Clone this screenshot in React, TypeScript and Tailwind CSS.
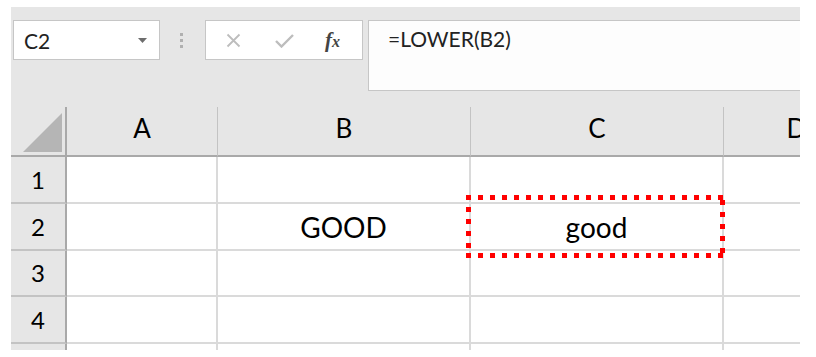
import React from 'react'

const font = { fontFamily: 'Lato, "Noto Sans", sans-serif' }

const cols = [
  { key: 'A', w: 'w-[151px]' },
  { key: 'B', w: 'w-[253px]' },
  { key: 'C', w: 'w-[253px]' },
  { key: 'D', w: 'w-[146px]' },
]

const rows = [
  { n: '1', h: 'h-[47px]' },
  { n: '2', h: 'h-[47px]' },
  { n: '3', h: 'h-[46px]' },
  { n: '4', h: 'h-[47px]' },
  { n: '', h: 'h-[47px]' },
]

const values: Record<string, string> = { B2: 'GOOD', C2: 'good' }

function NameBox() {
  return (
    <div className="ml-[2px] w-[147px] h-[40px] bg-white border border-[#c6c6c6] flex items-center pl-[10px] pr-[12px]">
      <span className="text-[21px] text-[#222] leading-none flex-1">C2</span>
      <svg width="9" height="5" viewBox="0 0 9 5">
        <path d="M0 0 L9 0 L4.5 5 Z" fill="#6d6d6d" />
      </svg>
    </div>
  )
}

function FxBox() {
  return (
    <div className="ml-[22px] w-[158px] h-[40px] bg-white border border-[#c6c6c6] flex items-center">
      <svg className="ml-[20px]" width="15" height="15" viewBox="0 0 15 15">
        <path d="M1.5 1.5 L13.5 13.5 M13.5 1.5 L1.5 13.5" stroke="#bdbdbd" strokeWidth="1.8" fill="none" />
      </svg>
      <svg className="ml-[34px]" width="19" height="15" viewBox="0 0 19 15">
        <path d="M1 8 L6.5 13.5 L18 2" stroke="#bdbdbd" strokeWidth="2.4" fill="none" />
      </svg>
      <span
        className="ml-[31px] text-[21px] italic font-bold text-[#444] leading-none"
        style={{ fontFamily: '"Liberation Serif", serif' }}
      >
        f<span className="text-[16px]">x</span>
      </span>
    </div>
  )
}

function Toolbar() {
  return (
    <div className="h-[100px] flex items-start pt-[13px]">
      <NameBox />
      <div className="ml-[20px] mt-[13px] flex flex-col gap-[3px]">
        <div className="w-[3px] h-[3px] bg-[#b0b0b0]" />
        <div className="w-[3px] h-[3px] bg-[#b0b0b0]" />
        <div className="w-[3px] h-[3px] bg-[#b0b0b0]" />
      </div>
      <FxBox />
      <div className="ml-[5px] flex-1 h-[71px] bg-[#fdfdfd] border border-[#c6c6c6] border-r-0 pl-[19px] pt-[7px]">
        <span className="text-[21px] text-[#222] leading-none">=LOWER(B2)</span>
      </div>
    </div>
  )
}

function Corner() {
  return (
    <div className="w-[56px] shrink-0 h-[50px] border-r-2 border-b-2 border-r-[#a9a9a9] border-b-[#a9a9a9] pl-[12px] pt-[6px]">
      <svg width="39" height="39" viewBox="0 0 39 39">
        <path d="M39 0 L39 39 L0 39 Z" fill="#b5b5b5" />
      </svg>
    </div>
  )
}

function HighlightBox() {
  const d = '5 7'
  return (
    <svg className="absolute left-[455px] top-[188px]" width="259" height="63" viewBox="0 0 259 63">
      <line x1="0" y1="2.5" x2="259" y2="2.5" stroke="#ff0000" strokeWidth="5" strokeDasharray={d} />
      <line x1="0" y1="60.5" x2="259" y2="60.5" stroke="#ff0000" strokeWidth="5" strokeDasharray={d} />
      <line x1="2.5" y1="0" x2="2.5" y2="63" stroke="#ff0000" strokeWidth="5" strokeDasharray={d} />
      <line x1="256.5" y1="5" x2="256.5" y2="63" stroke="#ff0000" strokeWidth="5" strokeDasharray={d} />
    </svg>
  )
}

export default function App() {
  return (
    <div className="w-[816px] h-[357px] bg-white overflow-hidden pt-[7px] pl-[11px]" style={font}>
      <div className="relative w-[789px] h-[343px] bg-[#e6e6e6] overflow-hidden">
        <Toolbar />

        {/* column headers */}
        <div className="flex h-[50px]">
          <Corner />
          {cols.map((c) => (
            <div
              key={c.key}
              className={`${c.w} shrink-0 h-[50px] border-b-2 border-b-[#a9a9a9] border-r border-r-[#c3c3c3] flex items-center justify-center pb-[5px] text-[26px] text-black`}
            >
              {c.key}
            </div>
          ))}
        </div>

        {/* rows */}
        {rows.map((r, i) => (
          <div key={i} className={`flex ${r.h}`}>
            <div className="w-[56px] shrink-0 border-r-2 border-r-[#a9a9a9] border-b-2 border-b-[#c3c3c3] flex items-center justify-center text-[24px] text-black">
              {r.n}
            </div>
            {cols.map((c) => (
              <div
                key={c.key}
                className={`${c.w} shrink-0 bg-white border-r-2 border-b-2 border-[#dadada] flex items-center justify-center text-[28px] text-black`}
              >
                {values[c.key + r.n] ?? ''}
              </div>
            ))}
          </div>
        ))}

        <HighlightBox />
      </div>
    </div>
  )
}
